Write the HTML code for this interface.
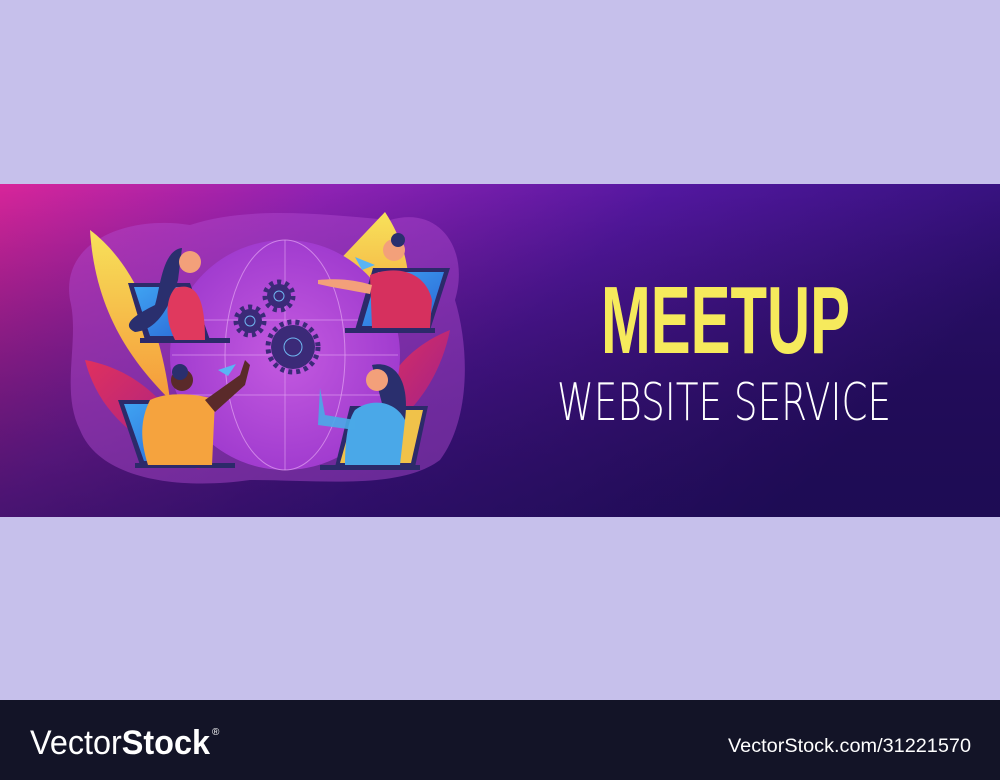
<!DOCTYPE html>
<html><head><meta charset="utf-8"><style>
html,body{margin:0;padding:0;width:1000px;height:780px;overflow:hidden;background:#c6c0eb}
svg{display:block}
</style></head><body>
<svg width="1000" height="780" viewBox="0 0 1000 780" xmlns="http://www.w3.org/2000/svg">
<defs>
<linearGradient id="bn" x1="0" y1="0" x2="1" y2="0.35">
<stop offset="0" stop-color="#d8259a"/>
<stop offset="0.3" stop-color="#8e22b4"/>
<stop offset="0.6" stop-color="#5317a0"/>
<stop offset="1" stop-color="#2e1075"/>
</linearGradient>
<linearGradient id="bv" x1="0" y1="0" x2="0" y2="1">
<stop offset="0" stop-color="#000" stop-opacity="0"/>
<stop offset="1" stop-color="#10083a" stop-opacity="0.55"/>
</linearGradient>
<radialGradient id="gl" cx="0.5" cy="0.5" r="0.5">
<stop offset="0" stop-color="#c45ae0"/>
<stop offset="1" stop-color="#a13ccf"/>
</radialGradient>
<linearGradient id="lf" x1="0" y1="0" x2="0" y2="1">
<stop offset="0" stop-color="#f7e25a"/><stop offset="1" stop-color="#f59a3a"/>
</linearGradient>
<linearGradient id="lr" x1="0" y1="0" x2="1" y2="1">
<stop offset="0" stop-color="#e0305e"/><stop offset="1" stop-color="#9a1f8e"/>
</linearGradient>
<linearGradient id="sc" x1="0" y1="0" x2="1" y2="1">
<stop offset="0" stop-color="#3fa3f2"/><stop offset="1" stop-color="#2a66d6"/>
</linearGradient>
</defs>
<rect x="0" y="0" width="1000" height="184" fill="#c6c0eb"/>
<rect x="0" y="184" width="1000" height="333" fill="url(#bn)"/>
<rect x="0" y="184" width="1000" height="333" fill="url(#bv)"/>
<rect x="0" y="517" width="1000" height="183" fill="#c6c0eb"/>
<rect x="0" y="700" width="1000" height="80" fill="#131427"/>

<path d="M70 300 C60 240 130 215 190 225 C250 205 330 215 390 220 C440 205 470 250 455 300 C470 350 470 420 440 460 C400 490 320 480 250 480 C180 490 100 480 80 430 C60 390 80 340 70 300Z" fill="#b24bd0" opacity="0.45"/>
<path d="M90 230 C130 260 160 320 170 400 C130 360 95 310 90 230Z" fill="url(#lf)"/>
<path d="M385 212 C410 250 420 300 390 340 C360 320 345 290 330 270 Z" fill="url(#lf)"/>
<path d="M85 360 C140 370 180 410 200 470 C150 450 100 420 85 360Z" fill="url(#lr)"/>
<path d="M450 330 C440 380 410 420 370 440 C375 390 400 350 450 330Z" fill="url(#lr)"/>
<circle cx="285" cy="355" r="115" fill="url(#gl)"/>
<ellipse cx="285" cy="355" rx="60" ry="115" fill="none" stroke="#e2a3f2" stroke-width="1" opacity="0.7"/>
<line x1="285" y1="240" x2="285" y2="470" stroke="#e2a3f2" opacity="0.6"/>
<line x1="175" y1="320" x2="395" y2="320" stroke="#e2a3f2" opacity="0.6"/>
<line x1="172" y1="355" x2="398" y2="355" stroke="#e2a3f2" opacity="0.6"/>
<line x1="180" y1="395" x2="390" y2="395" stroke="#e2a3f2" opacity="0.6"/>
<g fill="#3b2a78">
<circle cx="279" cy="296" r="12"/><circle cx="250" cy="321" r="12"/><circle cx="293" cy="347" r="22"/>
</g>
<g fill="none" stroke="#3b2a78" stroke-width="5" stroke-dasharray="4 4">
<circle cx="279" cy="296" r="14"/><circle cx="250" cy="321" r="14"/><circle cx="293" cy="347" r="25"/>
</g>
<g fill="none" stroke="#6fb6f0" stroke-width="1">
<circle cx="279" cy="296" r="5"/><circle cx="250" cy="321" r="5"/><circle cx="293" cy="347" r="9"/>
</g>
<path d="M128 283 L190 283 L210 340 L145 340Z" fill="#2c2a6a"/><path d="M134 287 L186 287 L204 336 L150 336Z" fill="url(#sc)"/><rect x="140" y="338" width="90" height="5" fill="#2c2a6a"/>
<path d="M373 268 L450 268 L430 330 L355 330Z" fill="#2c2a6a"/><path d="M378 272 L444 272 L427 326 L362 326Z" fill="url(#sc)"/><rect x="345" y="328" width="90" height="5" fill="#2c2a6a"/>
<path d="M118 400 L190 400 L210 465 L140 465Z" fill="#2c2a6a"/><path d="M124 404 L186 404 L205 461 L144 461Z" fill="url(#sc)"/><rect x="135" y="463" width="100" height="5" fill="#2c2a6a"/>
<path d="M350 406 L428 406 L415 467 L335 467Z" fill="#2c2a6a"/><path d="M355 410 L423 410 L411 463 L340 463Z" fill="#f0c24a"/><rect x="320" y="465" width="100" height="5" fill="#2c2a6a"/>
<path d="M182 248 C162 250 160 290 155 305 C135 315 120 325 135 332 C160 330 172 300 178 280Z" fill="#2a2f6e"/>
<circle cx="190" cy="262" r="11" fill="#f3a07a"/>
<path d="M175 288 C195 282 205 295 205 340 L175 340 C165 320 165 300 175 288Z" fill="#e0395e"/>
<circle cx="394" cy="250" r="11" fill="#f3a07a"/><circle cx="398" cy="240" r="7" fill="#2a2f6e"/>
<path d="M370 275 C395 265 425 270 432 300 L430 328 L372 328 Z" fill="#d6305e"/>
<path d="M318 280 C340 278 355 280 372 285 L370 294 C350 290 335 288 318 284Z" fill="#f3a07a"/>
<path d="M355 257 L375 265 L362 270Z" fill="#5ab4f5"/>
<circle cx="182" cy="380" r="11" fill="#5a2a2a"/><circle cx="180" cy="372" r="8" fill="#2a2f6e"/>
<path d="M150 400 C170 390 205 395 215 400 L212 465 L148 465 C140 440 140 420 150 400Z" fill="#f5a33e"/>
<path d="M205 400 L240 375 L245 360 L250 365 L245 385 L215 412Z" fill="#5a2a2a"/>
<path d="M218 370 L236 364 L228 376Z" fill="#5ab4f5"/>
<path d="M372 365 C395 360 410 380 405 420 L385 415Z" fill="#2a2f6e"/>
<circle cx="377" cy="380" r="11" fill="#f3a07a"/>
<path d="M355 410 C370 398 395 400 405 420 L400 465 L345 465 C345 440 348 420 355 410Z" fill="#4aa8e8"/>
<path d="M320 388 L325 415 L355 420 L355 430 L318 425Z" fill="#4aa8e8" opacity="0.9"/>
<text x="601" y="353" textLength="249" lengthAdjust="spacingAndGlyphs" font-family="Liberation Sans, sans-serif" font-weight="bold" font-size="96" fill="#f6ea5c">MEETUP</text>
<text x="557" y="420" textLength="334" lengthAdjust="spacingAndGlyphs" font-family="DejaVu Sans, Liberation Sans, sans-serif" font-weight="200" font-size="52" fill="#ffffff">WEBSITE SERVICE</text>
<text x="30" y="754" font-family="Liberation Sans, sans-serif" font-size="34" fill="#fff" textLength="180" lengthAdjust="spacingAndGlyphs"><tspan>Vector</tspan><tspan font-weight="bold">Stock</tspan></text>
<text x="212" y="735" font-family="Liberation Sans, sans-serif" font-size="10" fill="#fff">®</text>
<text x="728" y="752" font-family="Liberation Sans, sans-serif" font-size="19" fill="#fff" textLength="243" lengthAdjust="spacingAndGlyphs">VectorStock.com/31221570</text>
</svg>
</body></html>
